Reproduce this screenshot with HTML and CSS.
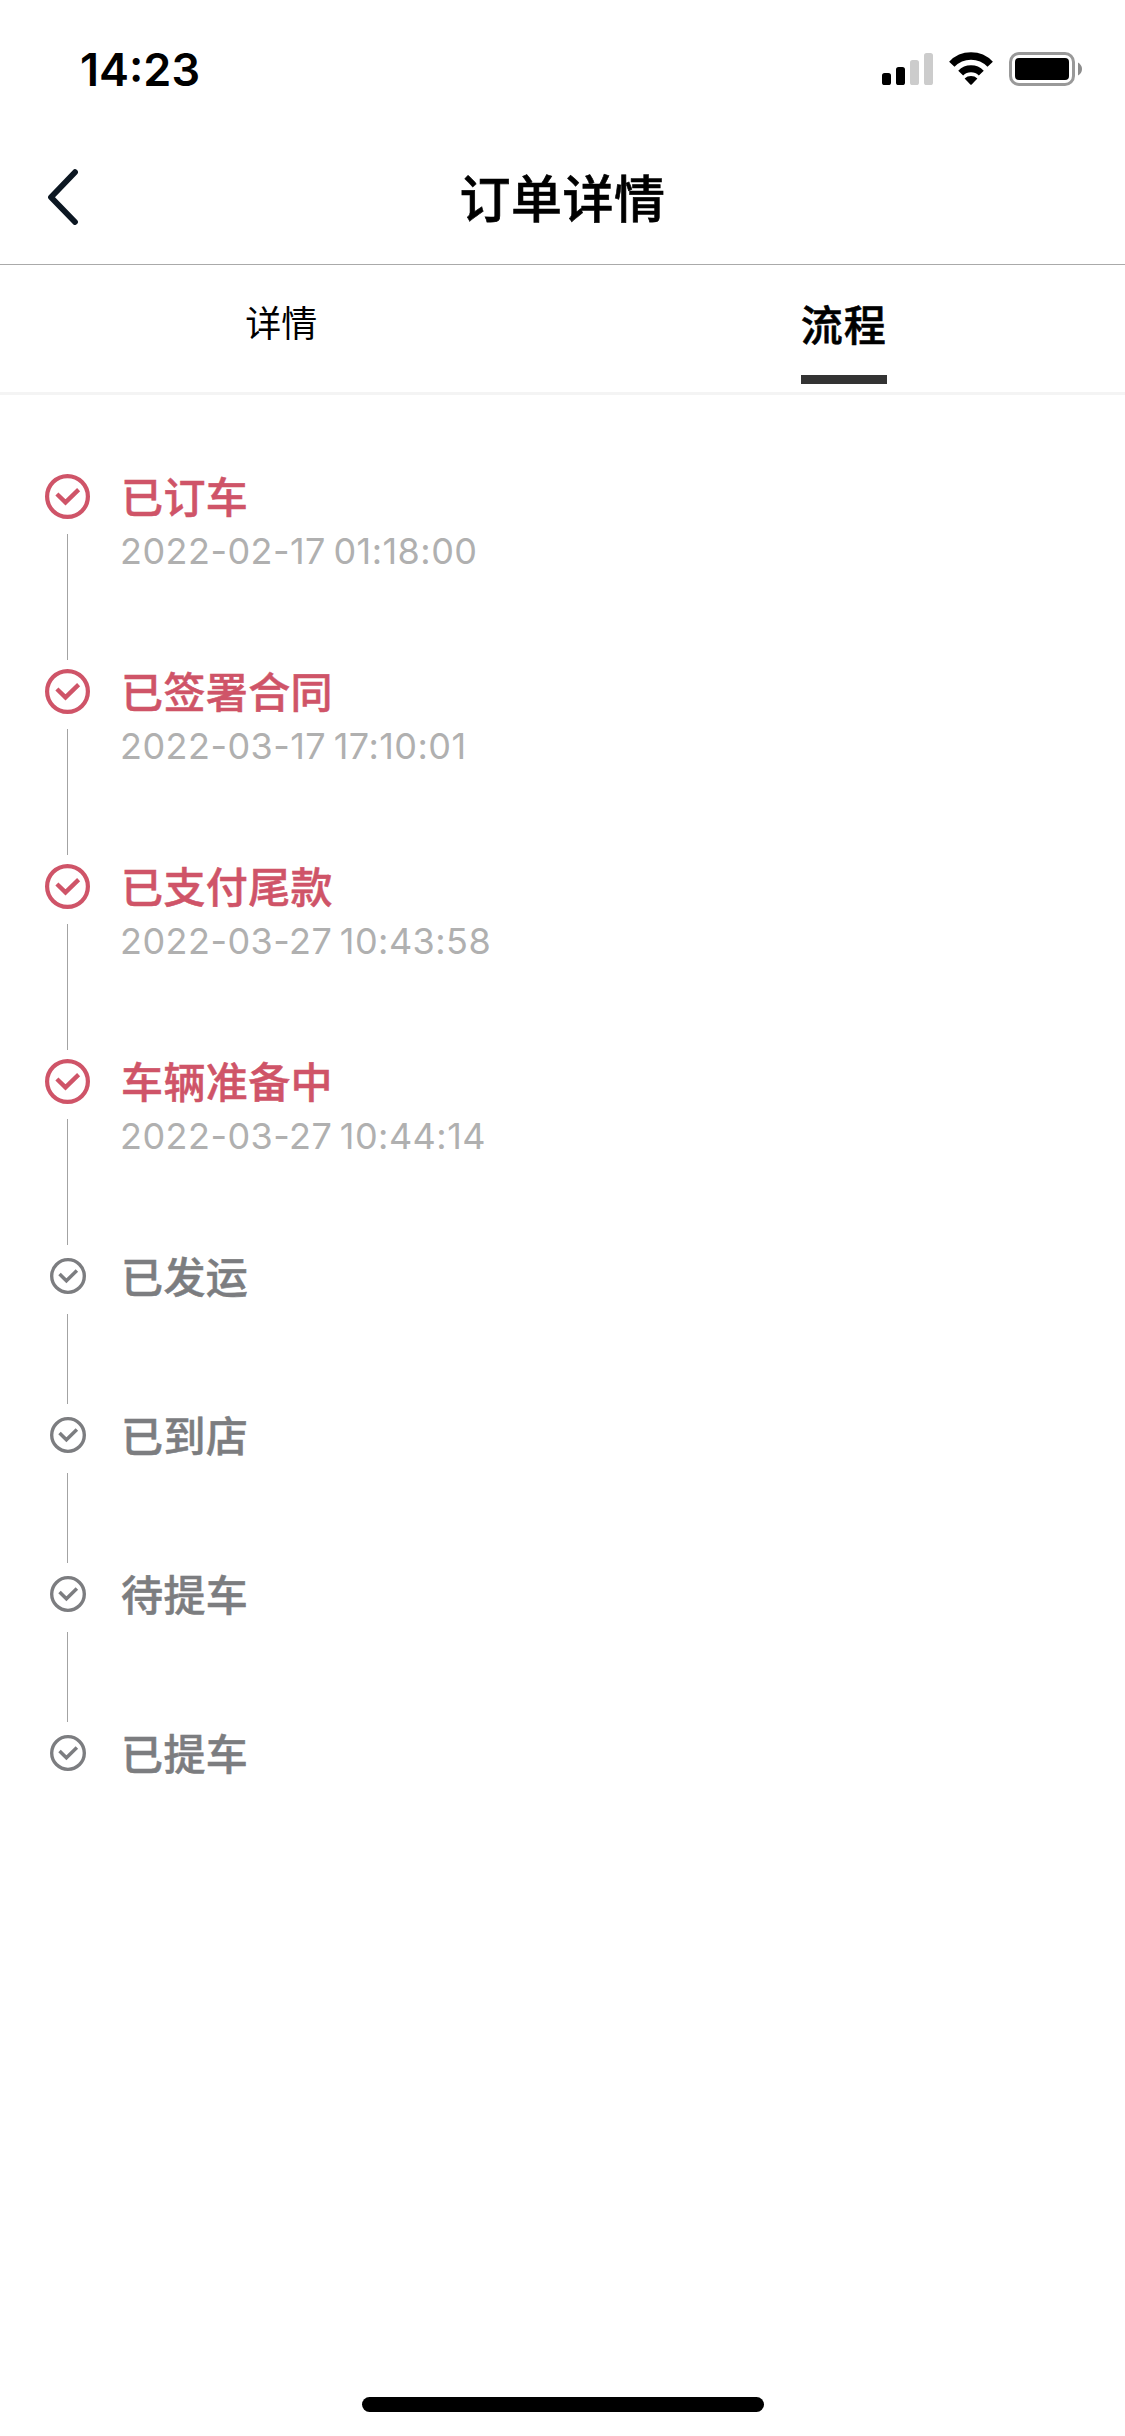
FILE: index.html
```html
<!DOCTYPE html>
<html lang="zh-CN">
<head>
<meta charset="utf-8">
<title>订单详情</title>
<link rel="stylesheet" href="styles.css">
</head>
<body>
<svg class="defs" aria-hidden="true">
  <symbol id="check" viewBox="0 0 45 45">
    <circle cx="22.5" cy="22.5" r="20.4" fill="none" stroke="currentColor" stroke-width="4.2"/>
    <path d="M11.9 20 L20.5 28.4 L33.6 15.7" fill="none" stroke="currentColor" stroke-width="4.4"/>
  </symbol>
</svg>
<div class="screen">
  <header class="status">
    <span class="time">14:23</span>
    <div class="indicators">
      <svg class="signal" viewBox="0 0 51 34">
        <rect x="0" y="21" width="9" height="12" rx="2.6"/>
        <rect x="14" y="15" width="9" height="18" rx="2.6"/>
        <rect class="off" x="28" y="8" width="9" height="25" rx="2.6"/>
        <rect class="off" x="42" y="1" width="9" height="32" rx="2.6"/>
      </svg>
      <svg class="wifi" viewBox="0 0 46 34">
        <path class="arc" stroke-width="7.4" d="M3.8 12.2 A26.5 26.5 0 0 1 42.2 12.2"/>
        <path class="arc" stroke-width="6.9" d="M12.7 21.1 A14.4 14.4 0 0 1 33.3 21.1"/>
        <path d="M16.6 26.4 A9.6 9.6 0 0 1 29.4 26.4 L23.7 32.4 Q23 33 22.3 32.4 Z"/>
      </svg>
      <svg class="battery" viewBox="0 0 74 34">
        <rect x="1.5" y="1.5" width="63" height="31" rx="8.5" fill="none" stroke="#999" stroke-width="3"/>
        <rect x="6" y="6" width="54" height="22" rx="4"/>
        <path d="M69 10.5 Q73 13 73 17 Q73 21 69 23.5 Z" fill="#8c8c8c"/>
      </svg>
    </div>
  </header>
  <nav class="navbar">
    <svg class="back" viewBox="0 0 32 56"><path d="M28 3.2 L4 28.3 L28 53"/></svg>
    <h1 class="title">订单详情</h1>
    <span class="spacer"></span>
  </nav>
  <div class="tabs">
    <div class="tab">详情</div>
    <div class="tab"><span class="active">流程</span></div>
  </div>
  <main class="steps">
    <section class="step done">
      <div class="rail"><svg class="icon"><use href="#check"/></svg><i class="line"></i></div>
      <div class="body"><h2 class="name">已订车</h2><p class="date">2022-02-17 01:18:00</p></div>
    </section>
    <section class="step done">
      <div class="rail"><svg class="icon"><use href="#check"/></svg><i class="line"></i></div>
      <div class="body"><h2 class="name">已签署合同</h2><p class="date">2022-03-17 17:10:01</p></div>
    </section>
    <section class="step done">
      <div class="rail"><svg class="icon"><use href="#check"/></svg><i class="line"></i></div>
      <div class="body"><h2 class="name">已支付尾款</h2><p class="date">2022-03-27 10:43:58</p></div>
    </section>
    <section class="step done">
      <div class="rail"><svg class="icon"><use href="#check"/></svg><i class="line"></i></div>
      <div class="body"><h2 class="name">车辆准备中</h2><p class="date">2022-03-27 10:44:14</p></div>
    </section>
    <section class="step">
      <div class="rail"><svg class="icon"><use href="#check"/></svg><i class="line"></i></div>
      <div class="body"><h2 class="name">已发运</h2></div>
    </section>
    <section class="step">
      <div class="rail"><svg class="icon"><use href="#check"/></svg><i class="line"></i></div>
      <div class="body"><h2 class="name">已到店</h2></div>
    </section>
    <section class="step">
      <div class="rail"><svg class="icon"><use href="#check"/></svg><i class="line"></i></div>
      <div class="body"><h2 class="name">待提车</h2></div>
    </section>
    <section class="step">
      <div class="rail"><svg class="icon"><use href="#check"/></svg></div>
      <div class="body"><h2 class="name">已提车</h2></div>
    </section>
  </main>
  <div class="home"></div>
</div>
</body>
</html>
```
FILE: styles.css
```css
* { box-sizing: border-box; margin: 0; padding: 0; }
body {
  background: #fff;
  color: #000;
  font-family: Inter, "Noto Sans CJK SC", sans-serif;
}
svg { display: block; }
.defs { display: none; }
.screen {
  display: flex;
  flex-direction: column;
  width: 1125px;
  height: 2436px;
  overflow: hidden;
}

.status {
  display: flex;
  justify-content: space-between;
  height: 132px;
  padding: 39px 42px 0 80px;
}
.time { font-size: 45px; font-weight: 600; line-height: 61px; }
.indicators { display: flex; padding-top: 13px; }
.signal { width: 51px; height: 34px; }
.signal .off { fill: #ccc; }
.wifi { width: 46px; height: 34px; margin-left: 15px; }
.wifi .arc { fill: none; stroke: #000; }
.battery { width: 74px; height: 34px; margin-left: 15px; }

.navbar {
  display: flex;
  align-items: center;
  justify-content: space-between;
  height: 133px;
  padding: 0 47px;
  border-bottom: 1px solid #aaa;
}
.back { width: 32px; height: 56px; margin-bottom: 2px; }
.back path {
  fill: none;
  stroke: #0c1722;
  stroke-width: 5.8;
  stroke-linecap: round;
  stroke-linejoin: round;
}
.title {
  padding-top: 4px;
  font-size: 51px;
  font-weight: 500;
  line-height: 72px;
  letter-spacing: 0.5px;
  -webkit-text-stroke: 0.6px currentColor;
}
.spacer { width: 32px; }

.tabs {
  display: flex;
  height: 130px;
  border-bottom: 3px solid #f4f4f4;
}
.tab {
  display: flex;
  flex: 1;
  justify-content: center;
  font-size: 36px;
  line-height: 119px;
}
.active {
  height: 119px;
  border-bottom: 9px solid #333;
  font-size: 42px;
  font-weight: 500;
  line-height: 121px;
  letter-spacing: 1px;
  -webkit-text-stroke: 0.6px currentColor;
}

.steps { flex: 1; padding: 70px 45px 0; }
.step { display: flex; }
.rail { width: 45px; padding-top: 13px; }
.icon { width: 36px; height: 36px; margin: 0 0 20px 5px; color: #7c7d80; }
.line { display: block; width: 1px; height: 90px; margin-left: 22px; background: #a3a3a3; }
.body { padding-left: 30px; }
.name {
  padding-left: 1px;
  font-size: 42px;
  font-weight: 500;
  line-height: 65px;
  letter-spacing: 0.4px;
  color: #7c7d80;
  -webkit-text-stroke: 0.5px currentColor;
}
.done .rail { padding-top: 9px; }
.done .icon { width: 45px; height: 45px; margin: 0 0 15px; color: #cf5468; }
.done .line { height: 126px; }
.done .name { color: #cf5468; }
.date {
  font-size: 36px;
  line-height: 43px;
  color: #b0b0b0;
  letter-spacing: 0.45px;
  word-spacing: -3px;
}

.home {
  width: 402px;
  height: 15px;
  margin: 0 auto 24px;
  border-radius: 8px;
  background: #000;
}
```
